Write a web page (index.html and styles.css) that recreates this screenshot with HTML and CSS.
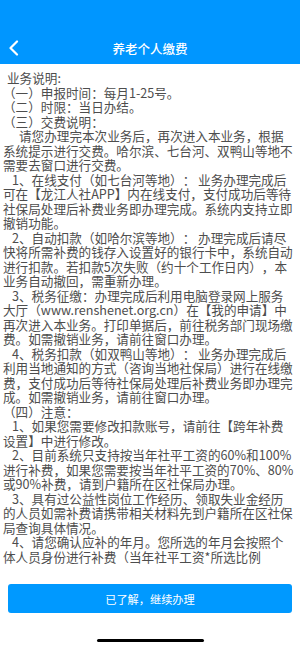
FILE: index.html
```html
<!DOCTYPE html>
<html lang="zh-CN">
<head>
    <meta charset="UTF-8">
    <meta content="width=device-width, initial-scale=1.0" name="viewport">
    <link rel="stylesheet" href="styles.css">
</head>
<body>
    <div id="app">
        <!-- Navigation Bar -->
        <div class="navBar">
            <div class="navInner">
                <a class="backBtn" href="#">
                    <svg width="12" height="16" viewBox="0 0 12 16">
                        <path d="M9 1.5 L2.5 8 L9 14.5" fill="none" stroke="#fff" stroke-width="2.2" stroke-linecap="round" stroke-linejoin="round"/>
                    </svg>
                </a>
                <span class="navTitle">养老个人缴费</span>
            </div>
        </div>

        <!-- Notice Text -->
        <div class="notice">
            <p class="lead">业务说明:</p>
            <p>（一）申报时间：每月1-25号。</p>
            <p>（二）时限：当日办结。</p>
            <p>（三）交费说明：</p>
            <p class="para">请您办理完本次业务后，再次进入本业务，根据系统提示进行交费。哈尔滨、七台河、双鸭山等地不需要去窗口进行交费。</p>
            <p class="item">1、在线支付（如七台河等地）： 业务办理完成后可在【龙江人社APP】内在线支付，支付成功后等待社保局处理后补费业务即办理完成。系统内支持立即撤销功能。</p>
            <p class="item">2、自动扣款（如哈尔滨等地）： 办理完成后请尽快将所需补费的钱存入设置好的银行卡中，系统自动进行扣款。若扣款5次失败（约十个工作日内），本业务自动撤回，需重新办理。</p>
            <p class="item">3、税务征缴：办理完成后利用电脑登录网上服务大厅（www.renshenet.org.cn）在【我的申请】中再次进入本业务。打印单据后，前往税务部门现场缴费。如需撤销业务，请前往窗口办理。</p>
            <p class="item">4、税务扣款（如双鸭山等地）： 业务办理完成后利用当地通知的方式（咨询当地社保局）进行在线缴费，支付成功后等待社保局处理后补费业务即办理完成。如需撤销业务，请前往窗口办理。</p>
            <p>（四）注意：</p>
            <p class="item">1、如果您需要修改扣款账号，请前往【跨年补费设置】中进行修改。</p>
            <p class="item">2、目前系统只支持按当年社平工资的60%和100%进行补费，如果您需要按当年社平工资的70%、80%或90%补费，请到户籍所在区社保局办理。</p>
            <p class="item">3、具有过公益性岗位工作经历、领取失业金经历的人员如需补费请携带相关材料先到户籍所在区社保局查询具体情况。</p>
            <p class="item">4、请您确认应补的年月。您所选的年月会按照个体人员身份进行补费（当年社平工资*所选比例<br>*应补月数），确认无误后再进行下一步操作。</p>
        </div>

        <!-- Bottom Button -->
        <div class="footer">
            <button class="confirmBtn" type="button">已了解，继续办理</button>
            <div class="homeBar"></div>
        </div>
    </div>
</body>
</html>
```

FILE: styles.css
```css
body {
    margin: 0;
    font-family: "Noto Sans CJK SC", "Noto Sans", sans-serif;
    background: #fff;
}

#app {
    display: flex;
    flex-direction: column;
    height: 649px;
    overflow: hidden;
}

.navBar {
    background-color: #0096ff;
    padding-top: 32px;
    flex-shrink: 0;
}

.navInner {
    position: relative;
    height: 32px;
    display: flex;
    align-items: center;
    justify-content: center;
}

.backBtn {
    position: absolute;
    left: 8px;
    top: 8px;
    display: flex;
}

.navTitle {
    color: #fff;
    font-size: 12.5px;
    font-weight: 500;
}

.notice {
    flex: 1;
    overflow: hidden;
    padding: 7px 4px 0 3px;
    color: #4d4d4d;
    font-size: 12.6px;
    line-height: 14.5px;
    text-spacing-trim: space-all;
}

.notice p {
    margin: 0;
}

.lead {
    text-indent: 4px;
}

.para {
    text-indent: 16px;
}

.item {
    text-indent: 9px;
}

.footer {
    flex-shrink: 0;
    height: 84px;
    padding: 19px 8px 0;
    box-sizing: border-box;
    display: flex;
    flex-direction: column;
    align-items: center;
}

.confirmBtn {
    width: 100%;
    height: 29px;
    border: none;
    border-radius: 3px;
    background-color: #0099ff;
    color: #fff;
    font-family: inherit;
    font-size: 11.2px;
}

.homeBar {
    margin-top: 26px;
    width: 107px;
    height: 3px;
    border-radius: 2px;
    background: #000;
}
```
